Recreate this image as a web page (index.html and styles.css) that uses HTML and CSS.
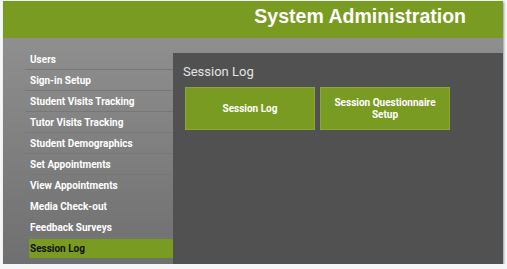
FILE: index.html
```html
<!DOCTYPE html>
<html lang="en">
<head>
<meta charset="UTF-8">
<title>System Administration</title>
<link rel="stylesheet" href="styles.css">
</head>
<body>
<div class="window">
  <div class="header">
    <h1>System Administration</h1>
  </div>
  <div class="content">
    <ul class="side-menu">
      <li><a href="#">Users</a></li>
      <li><a href="#">Sign-in Setup</a></li>
      <li><a href="#">Student Visits Tracking</a></li>
      <li><a href="#">Tutor Visits Tracking</a></li>
      <li><a href="#">Student Demographics</a></li>
      <li><a href="#">Set Appointments</a></li>
      <li><a href="#">View Appointments</a></li>
      <li><a href="#">Media Check-out</a></li>
      <li><a href="#">Feedback Surveys</a></li>
      <li class="active"><a href="#">Session Log</a></li>
    </ul>
    <div class="main-panel">
      <h2>Session Log</h2>
      <div class="tile-row">
        <a class="tile" href="#">Session Log</a>
        <a class="tile" href="#">Session Questionnaire<br>Setup</a>
      </div>
    </div>
  </div>
</div>
</body>
</html>
```

FILE: styles.css
```css
/* styles.css */
body {
  margin: 0;
  background-color: #f4f6f8;
  font-family: 'Liberation Sans', Arial, sans-serif;
}

.window {
  margin: 1px 0 0 3px;
  width: 500px;
  height: 263px;
  display: flex;
  flex-direction: column;
  box-shadow: 1px 1px 2px #9a9a9a;
}

.header {
  height: 37px;
  background-color: #7a9b22;
  display: flex;
  justify-content: flex-end;
  align-items: flex-start;
  padding-right: 37px;
}

.header h1 {
  margin: 4px 0 0 0;
  color: #fff;
  font-size: 19.5px;
  font-weight: bold;
}

.content {
  flex: 1;
  display: flex;
  background: linear-gradient(to bottom, #8f8f8f, #6f6f6f);
}

.side-menu {
  list-style: none;
  margin: 11px 0 0 22px;
  padding: 0;
  width: 148px;
}

.side-menu li {
  height: 20px;
  border-bottom: 1px solid #777;
  display: flex;
  align-items: center;
}

.side-menu li a {
  color: #fff;
  text-decoration: none;
  font-family: Roboto, sans-serif;
  font-size: 10px;
  font-weight: bold;
  margin-left: 4px;
  padding-left: 1px;
  flex: 1;
  line-height: 19px;
}

.side-menu li.active {
  border-bottom: none;
}

.side-menu li.active a {
  background-color: #7a9b22;
  color: #111;
}

.main-panel {
  flex: 1;
  margin-top: 15px;
  background-color: #515151;
  padding: 0 10px;
}

.main-panel h2 {
  margin: 11px 0 8px 0;
  color: #e4e4e4;
  font-family: Roboto, sans-serif;
  font-size: 13px;
  font-weight: normal;
}

.tile-row {
  display: flex;
  gap: 5px;
  margin-left: 2px;
}

.tile {
  width: 128px;
  height: 41px;
  background-color: #7a9b22;
  border: 1px solid #8aa834;
  color: #fff;
  text-decoration: none;
  font-family: Roboto, sans-serif;
  font-size: 10px;
  font-weight: bold;
  display: flex;
  justify-content: center;
  align-items: center;
  text-align: center;
  line-height: 12px;
}
```
